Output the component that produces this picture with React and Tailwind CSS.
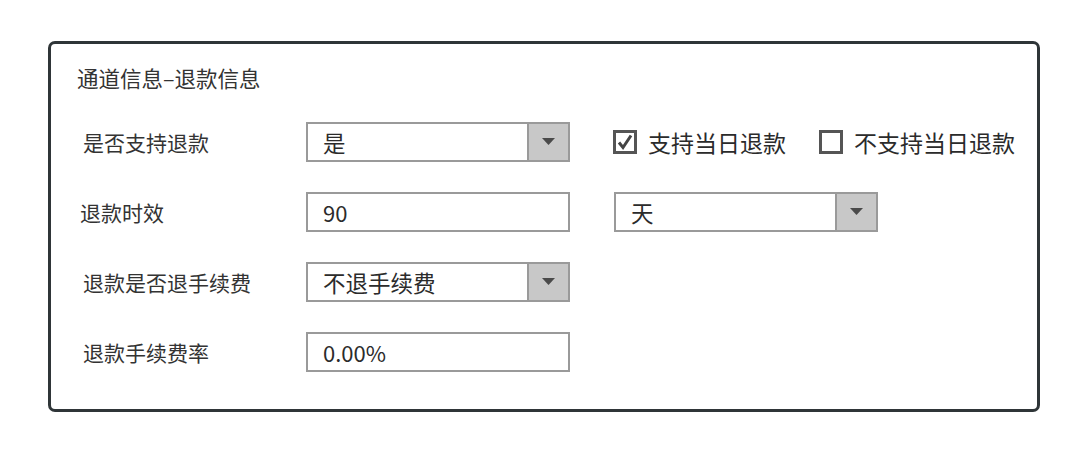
const font = { fontFamily: '"Noto Sans CJK SC", "Noto Sans", sans-serif' }

function Caret() {
    return (
        <div className="w-[41px] h-full bg-[#c8c8c8] border-l-2 border-[#9a9a9a] flex items-center justify-center">
            <svg width="13" height="8" viewBox="0 0 13 8">
                <polygon points="0,0 13,0 6.5,7" fill="#4a4a4a" />
            </svg>
        </div>
    )
}

function Select({ value, className = '' }) {
    return (
        <div className={`w-[264px] h-[40px] border-2 border-[#9a9a9a] bg-white flex items-center ${className}`}>
            <span className="flex-1 pl-[15px] text-[22.5px] text-[#2b2b2b] leading-none">{value}</span>
            <Caret />
        </div>
    )
}

function Input({ value }) {
    return (
        <div className="w-[264px] h-[40px] border-2 border-[#9a9a9a] bg-white flex items-center">
            <span className="pl-[15px] text-[22px] text-[#2b2b2b] leading-none">{value}</span>
        </div>
    )
}

function Checkbox({ checked, label }) {
    return (
        <label className="flex items-center gap-[11px]">
            <span className="w-[24px] h-[24px] border-[3px] border-[#555] flex items-center justify-center">
                {checked && (
                    <svg width="18" height="18" viewBox="0 0 18 18">
                        <polyline points="3,9.5 7,14.5 15,2.5" fill="none" stroke="#444" strokeWidth="3" strokeLinejoin="miter" />
                    </svg>
                )}
            </span>
            <span className="text-[23px] text-[#2b2b2b] leading-none">{label}</span>
        </label>
    )
}

export default function App() {
    const rowLabel = 'w-[223px] text-[21px] text-[#333] leading-none'

    return (
        <div className="w-[1080px] h-[453px] bg-white pt-[41px] pl-[48px]" style={font}>
            <div className="w-[992px] h-[371px] border-[3px] border-[#2f3538] rounded-[7px] pl-[32px] pt-[20px]">
                <div className="h-[28px] flex items-center text-[21.5px] text-[#333] -ml-[6px]">
                    通道信息–退款信息
                </div>

                <div className="mt-[30px] flex flex-col gap-[30px]">
                    {/* 是否支持退款 */}
                    <div className="flex items-center h-[40px]">
                        <div className={rowLabel}>是否支持退款</div>
                        <Select value="是" />
                        <div className="ml-[43px] flex items-center gap-[33px]">
                            <Checkbox checked label="支持当日退款" />
                            <Checkbox label="不支持当日退款" />
                        </div>
                    </div>

                    {/* 退款时效 */}
                    <div className="flex items-center h-[40px]">
                        <div className={`${rowLabel} -ml-[3px]`}>退款时效</div>
                        <div className="ml-[3px] flex items-center">
                            <Input value="90" />
                            <Select value="天" className="ml-[44px]" />
                        </div>
                    </div>

                    {/* 退款是否退手续费 */}
                    <div className="flex items-center h-[40px]">
                        <div className={rowLabel}>退款是否退手续费</div>
                        <Select value="不退手续费" />
                    </div>

                    {/* 退款手续费率 */}
                    <div className="flex items-center h-[40px]">
                        <div className={rowLabel}>退款手续费率</div>
                        <Input value="0.00%" />
                    </div>
                </div>
            </div>
        </div>
    )
}
